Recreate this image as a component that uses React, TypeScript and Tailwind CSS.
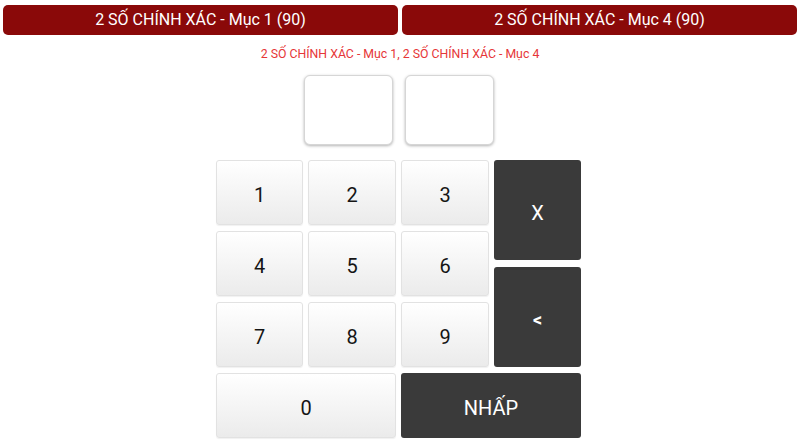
export default function App() {
    const key =
        "flex items-center justify-center pt-[5px] rounded-[3px] border border-[#e2e2e2] bg-gradient-to-b from-white to-[#ebebeb] text-[20px] text-[#151515] shadow-[0_1px_1px_rgba(0,0,0,0.06)]";
    const dark =
        "flex items-center justify-center pt-[5px] rounded-[3px] bg-[#3a3a3a] text-white";

    return (
        <div className="w-[800px] h-[446px] bg-white font-['Roboto',sans-serif] overflow-hidden">
            {/* Header buttons */}
            <div className="flex gap-[4px] px-[3px] pt-[5px]">
                <div className="flex-1 h-[30px] rounded-[5px] bg-[#8a0909] text-white text-[16px] flex items-center justify-center">
                    2 SỐ CHÍNH XÁC - Mục 1 (90)
                </div>
                <div className="flex-1 h-[30px] rounded-[5px] bg-[#8a0909] text-white text-[16px] flex items-center justify-center">
                    2 SỐ CHÍNH XÁC - Mục 4 (90)
                </div>
            </div>

            {/* Selected */}
            <div className="mt-[12px] text-center text-[12.3px] leading-[15px] text-[#e63638]">
                2 SỐ CHÍNH XÁC - Mục 1, 2 SỐ CHÍNH XÁC - Mục 4
            </div>

            {/* Inputs */}
            <div className="mt-[13px] flex justify-center gap-[12px] pr-[2px]">
                <div className="w-[89px] h-[70px] rounded-[6px] border border-[#d6d6d6] bg-white shadow-[0_1px_3px_rgba(0,0,0,0.3)]" />
                <div className="w-[89px] h-[70px] rounded-[6px] border border-[#d6d6d6] bg-white shadow-[0_1px_3px_rgba(0,0,0,0.3)]" />
            </div>

            {/* Keypad */}
            <div className="mt-[15px] ml-[216px] grid grid-cols-[87px_88px_88px_87px] grid-rows-[65px_65px_65px_65px] gap-x-[5px] gap-y-[6px] w-fit">
                <div className={key}>1</div>
                <div className={key}>2</div>
                <div className={key}>3</div>
                <div className="row-span-3 flex flex-col gap-[7px]">
                    <div className={dark + " flex-1 text-[20px]"}>X</div>
                    <div className={dark + " flex-1 text-[18px] font-bold"}>&lt;</div>
                </div>
                <div className={key}>4</div>
                <div className={key}>5</div>
                <div className={key}>6</div>
                <div className={key}>7</div>
                <div className={key}>8</div>
                <div className={key}>9</div>
                <div className={key + " col-span-2"}>0</div>
                <div className={dark + " col-span-2 text-[20px]"}>NHẤP</div>
            </div>
        </div>
    );
}
